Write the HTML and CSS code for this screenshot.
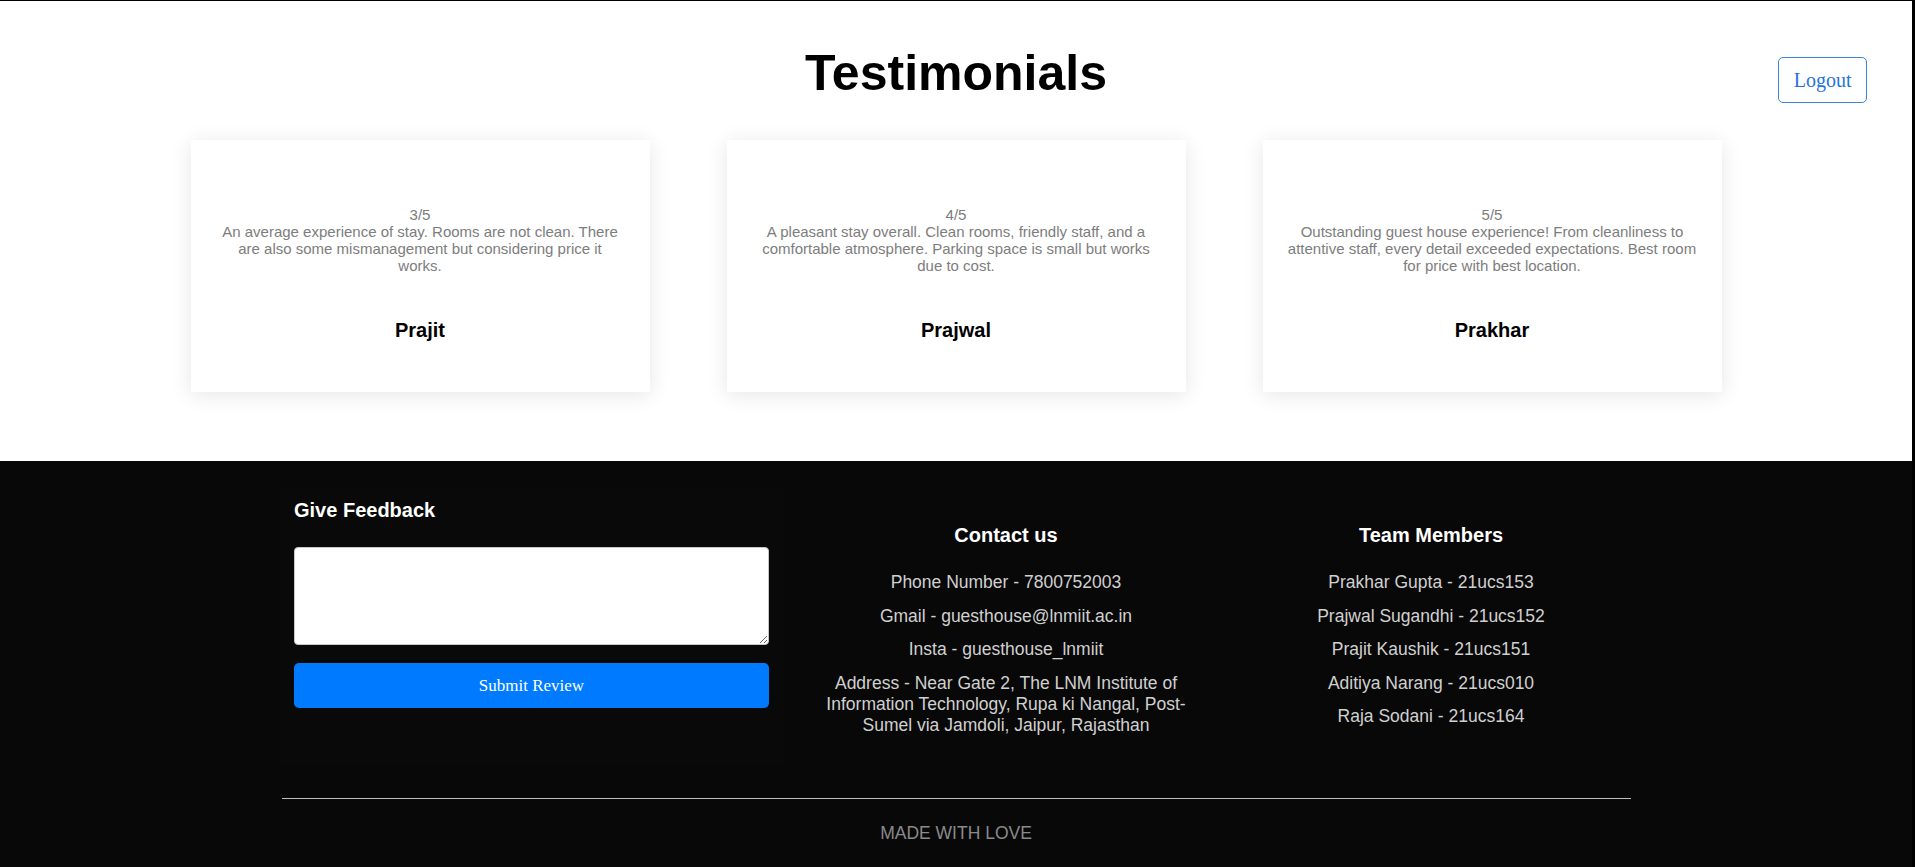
FILE: index.html
```html
<!DOCTYPE html>
<html lang="en">
<head>
<meta charset="utf-8">
<title>Testimonials</title>
<link rel="stylesheet" href="styles.css">
</head>
<body>
  <header class="header">
    <h1 class="title">Testimonials</h1>
    <button class="logout">Logout</button>
  </header>

  <section class="cards">
    <div class="card">
      <p class="rating">3/5</p>
      <p class="quote">An average experience of stay. Rooms are not clean. There are also some mismanagement but considering price it works.</p>
      <h3 class="name">Prajit</h3>
    </div>
    <div class="card">
      <p class="rating">4/5</p>
      <p class="quote">A pleasant stay overall. Clean rooms, friendly staff, and a comfortable atmosphere. Parking space is small but works due to cost.</p>
      <h3 class="name">Prajwal</h3>
    </div>
    <div class="card">
      <p class="rating">5/5</p>
      <p class="quote">Outstanding guest house experience! From cleanliness to attentive staff, every detail exceeded expectations. Best room for price with best location.</p>
      <h3 class="name">Prakhar</h3>
    </div>
  </section>

  <footer class="footer">
    <div class="footer-cols">
      <div class="feedback">
        <h3 class="col-title">Give Feedback</h3>
        <textarea class="feedback-input"></textarea>
        <button class="submit">Submit Review</button>
      </div>
      <div class="col col-contact">
        <h3 class="col-title">Contact us</h3>
        <ul class="list">
          <li>Phone Number - 7800752003</li>
          <li>Gmail - guesthouse@lnmiit.ac.in</li>
          <li>Insta - guesthouse_lnmiit</li>
          <li>Address - Near Gate 2, The LNM Institute of Information Technology, Rupa ki Nangal, Post-Sumel via Jamdoli, Jaipur, Rajasthan</li>
        </ul>
      </div>
      <div class="col">
        <h3 class="col-title">Team Members</h3>
        <ul class="list">
          <li>Prakhar Gupta - 21ucs153</li>
          <li>Prajwal Sugandhi - 21ucs152</li>
          <li>Prajit Kaushik - 21ucs151</li>
          <li>Aditiya Narang - 21ucs010</li>
          <li>Raja Sodani - 21ucs164</li>
        </ul>
      </div>
    </div>
    <hr class="divider">
    <p class="made">MADE WITH LOVE</p>
  </footer>
</body>
</html>
```

FILE: styles.css
```css
html {
  background: #000;
}

body {
  margin: 1px 3px 0 0;
  background: #fff;
  font-family: "Liberation Sans", Arial, sans-serif;
}

.header {
  position: relative;
  padding-top: 44.5px;
  text-align: center;
}

.title {
  margin: 0;
  font-size: 50px;
  line-height: 55px;
  font-weight: bold;
  color: #000;
}

.logout {
  position: absolute;
  top: 56px;
  right: 45px;
  font-family: "Liberation Serif", "Times New Roman", serif;
  font-size: 20px;
  line-height: 23px;
  color: #1f74e0;
  background: #fff;
  border: 1px solid #3a86d9;
  border-radius: 5px;
  padding: 10.5px 14.5px;
}

.cards {
  display: flex;
  justify-content: center;
  gap: 77px;
  margin-top: 39.5px;
  padding-bottom: 68.5px;
}

.card {
  width: 459px;
  height: 252px;
  box-sizing: border-box;
  padding: 65.5px 25px 0;
  background: #fff;
  text-align: center;
  box-shadow: 0 3px 20px rgba(0, 0, 0, 0.1);
}

.rating,
.quote {
  margin: 0;
  font-size: 15px;
  color: #7d7d7d;
}

.name {
  margin: 45px 0 0;
  font-size: 20px;
  line-height: 23px;
  font-weight: bold;
  color: #000;
}

.footer {
  background: #080808;
  padding-top: 26px;
  padding-bottom: 30px;
}

.footer-cols {
  width: 1350px;
  margin: 0 auto;
  display: flex;
  align-items: flex-start;
}

.feedback {
  width: 504px;
  box-sizing: border-box;
  padding: 12px 16px 57px 13px;
  background: #090909;
}

.col-title {
  margin: 0;
  font-size: 20px;
  line-height: 23px;
  font-weight: bold;
  color: #fff;
}

.feedback-input {
  display: block;
  width: 100%;
  height: 98px;
  box-sizing: border-box;
  margin-top: 25.5px;
  border: 1px solid #c8c8c8;
  border-radius: 4px;
  background: #fff;
}

.submit {
  display: block;
  width: 100%;
  height: 45px;
  margin-top: 18px;
  border: 0;
  border-radius: 5px;
  background: #007bff;
  color: #fff;
  font-family: "Liberation Serif", "Times New Roman", serif;
  font-size: 17px;
}

.col {
  width: 400px;
  padding-top: 37.5px;
  text-align: center;
}

.col-contact {
  margin-left: 21px;
  margin-right: 25px;
}

.list {
  list-style: none;
  margin: 25px 0 0;
  padding: 0;
}

.list li {
  font-size: 17.5px;
  line-height: 21px;
  color: #d0d0d0;
  margin-top: 12.5px;
}

.list li:first-child {
  margin-top: 0;
}

.divider {
  width: 1349px;
  margin: 33px auto 0;
  border: 0;
  border-top: 1px solid #bdbdbd;
  height: 0;
}

.made {
  margin: 23.5px 0 0;
  text-align: center;
  font-size: 17.5px;
  line-height: 21px;
  color: #8a8a8a;
}
```
